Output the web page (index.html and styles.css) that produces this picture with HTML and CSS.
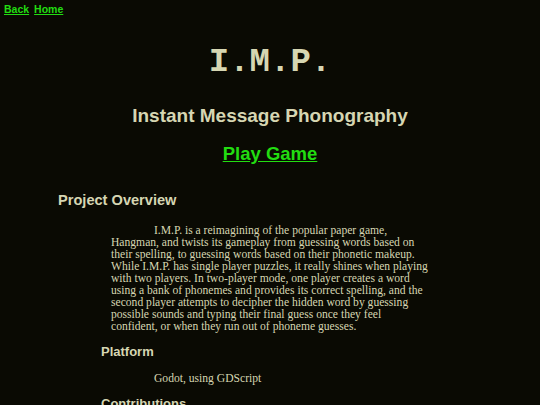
FILE: index.html
```html
<!DOCTYPE html>
<html>
<head>
<meta charset="utf-8">
<link rel="stylesheet" href="styles.css">
</head>
<body>
<nav class="nav"><a href="#">Back</a><a href="#">Home</a></nav>
<header class="hero">
  <h1 class="title">I.M.P.</h1>
  <p class="subtitle">Instant Message Phonography</p>
  <a class="play" href="#">Play Game</a>
</header>
<section class="overview">
  <h2 class="section-title">Project Overview</h2>
  <p class="body-text">I.M.P. is a reimagining of the popular paper game, Hangman, and twists its gameplay from guessing words based on their spelling, to guessing words based on their phonetic makeup. While I.M.P. has single player puzzles, it really shines when playing with two players. In two-player mode, one player creates a word using a bank of phonemes and provides its correct spelling, and the second player attempts to decipher the hidden word by guessing possible sounds and typing their final guess once they feel confident, or when they run out of phoneme guesses.</p>
  <h3 class="sub-title">Platform</h3>
  <p class="body-text body-text-short">Godot, using GDScript</p>
  <h3 class="sub-title">Contributions</h3>
</section>
</body>
</html>
```
FILE: styles.css
```css
html, body {
  margin: 0;
  padding: 0;
  background: #0a0a03;
  color: #d6d6b2;
}
body {
  font-family: "Liberation Serif", serif;
}
.nav {
  display: flex;
  gap: 5px;
  padding: 3px 4px;
  font-family: "Liberation Sans", Arial, sans-serif;
  font-weight: bold;
  font-size: 10.5px;
}
.nav a {
  color: #22dd11;
}
.hero {
  display: flex;
  flex-direction: column;
  align-items: center;
}
.title {
  margin: 24px 0 0;
  font-family: "Liberation Mono", monospace;
  font-size: 34px;
  font-weight: bold;
  line-height: 40px;
}
.subtitle {
  margin: 22px 0 0;
  font-family: "Liberation Sans", Arial, sans-serif;
  font-weight: bold;
  font-size: 19px;
  line-height: 24px;
}
.play {
  margin-top: 15px;
  font-family: "Liberation Sans", Arial, sans-serif;
  font-weight: bold;
  font-size: 18.5px;
  line-height: 22px;
  color: #22dd11;
}
.overview {
  padding: 0 58px;
}
.section-title {
  margin: 26px 0 0;
  font-family: "Liberation Sans", Arial, sans-serif;
  font-size: 14.6px;
  line-height: 18px;
}
.body-text {
  margin: 16px 0 0 53px;
  width: 318px;
  font-size: 11.6px;
  line-height: 12px;
  text-indent: 43px;
}
.body-text-short {
  margin-top: 13px;
}
.sub-title {
  margin: 11px 0 0 43px;
  font-family: "Liberation Sans", Arial, sans-serif;
  font-size: 13px;
  line-height: 16px;
}
```
